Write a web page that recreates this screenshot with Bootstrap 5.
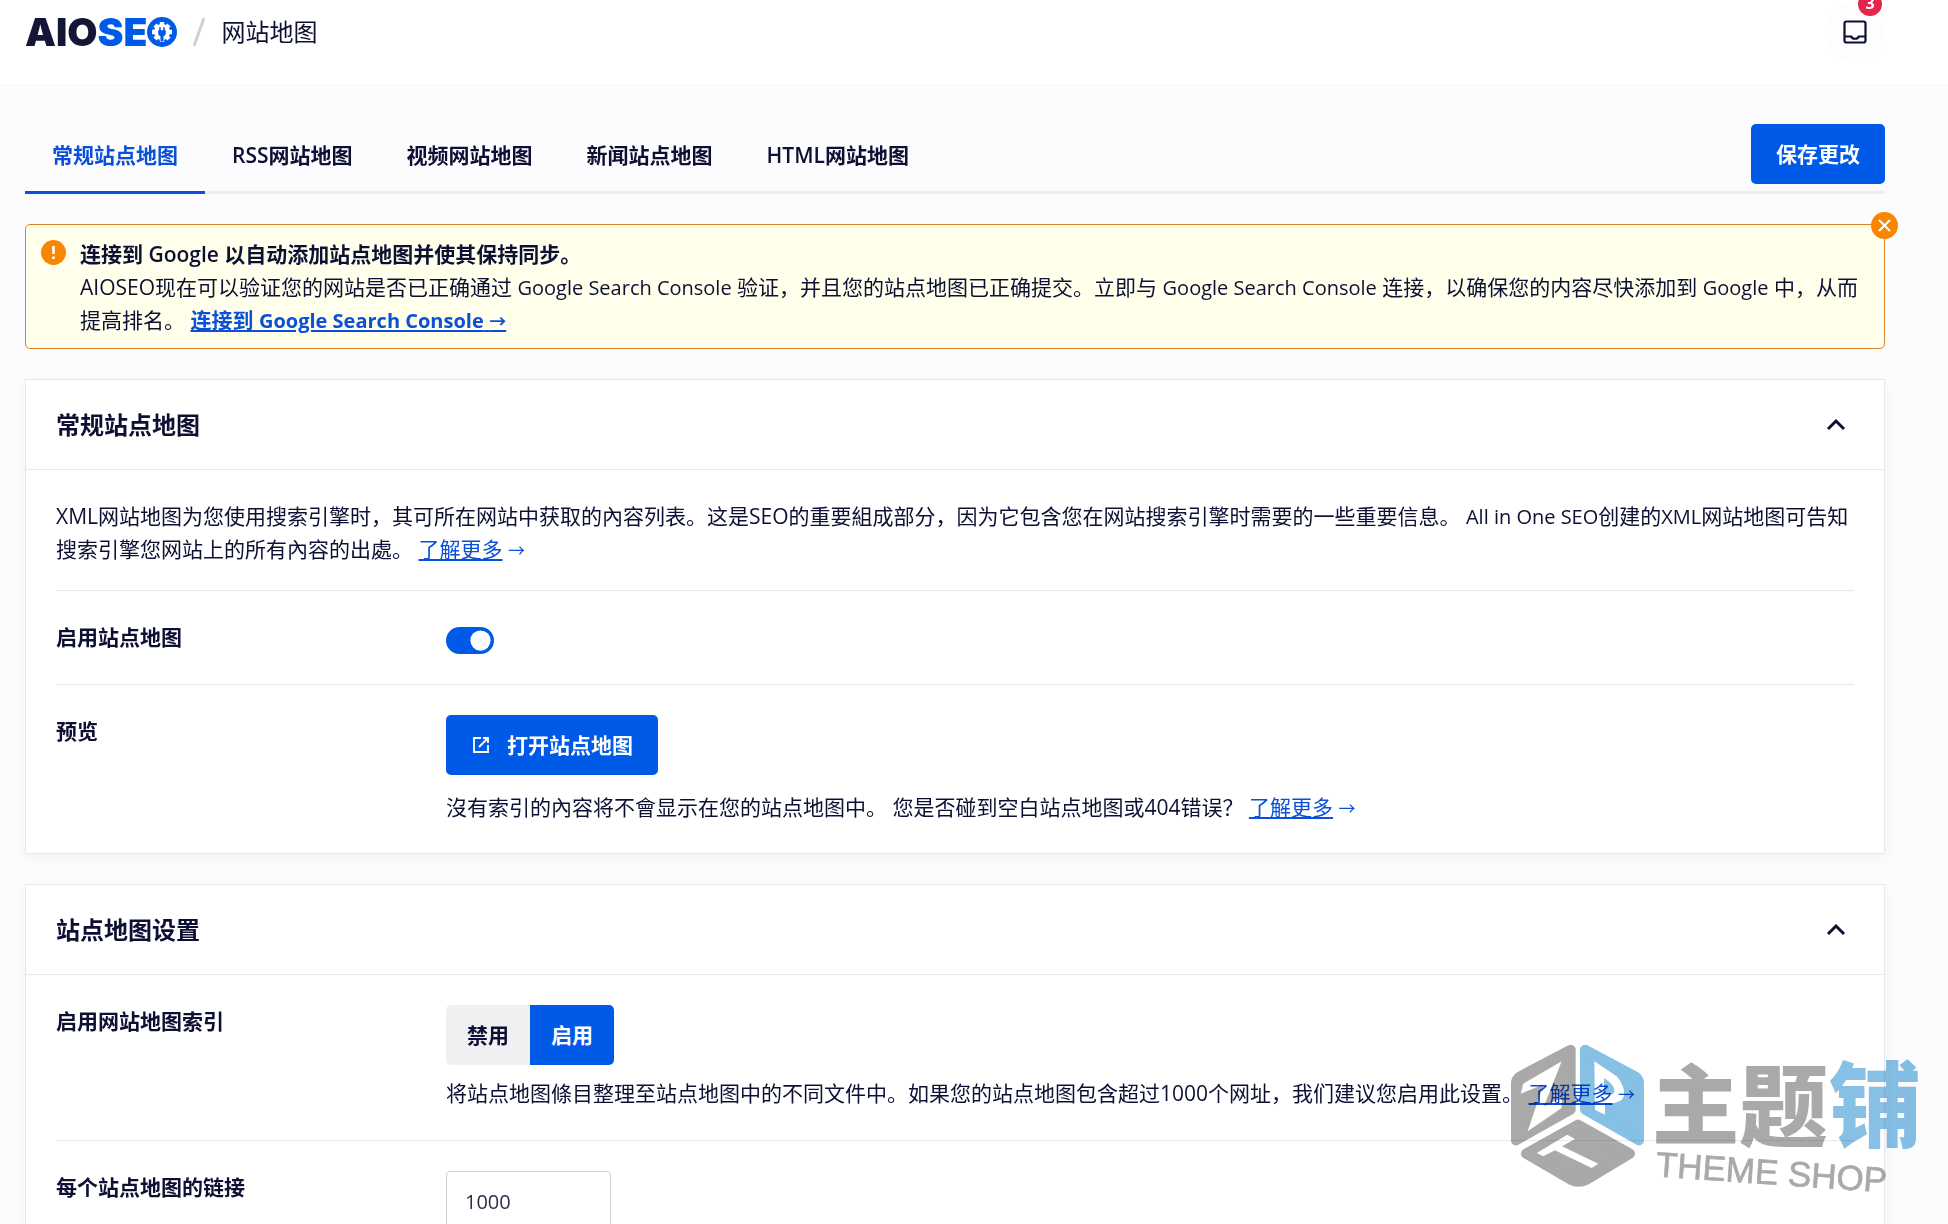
<!DOCTYPE html>
<html lang="zh-CN">
<head>
<meta charset="utf-8">
<meta name="viewport" content="width=device-width, initial-scale=1">
<title>AIOSEO 网站地图</title>
<link href="https://cdn.jsdelivr.net/npm/bootstrap@5.3.0/dist/css/bootstrap.min.css" rel="stylesheet">
<style>
:root{--ink:#0d1033;--blue:#005ae8;--line:#e8e8eb;--orange:#fa8500}
body{font-family:"Open Sans","Noto Sans CJK SC",sans-serif;font-size:21px;line-height:33px;color:var(--ink);background:#fcfcfe}
a{color:#0a50d8}
.shell{overflow:hidden}
.topbar{height:86px;background:#fff;padding:0 63px 22px 25px;border-bottom:1px solid #f8f8fa}
.wordmark{font-family:Inter,sans-serif;font-weight:900;font-size:39px;line-height:44px;color:#141638}
.wordmark span{color:var(--blue)}
.crumb{font-size:24px}
.inbox{width:60px;height:60px;background:#fdfdff;color:var(--ink)}
.count{top:-10px;right:3px;width:24px;height:24px;font-size:16px;line-height:23px;background:#e2264d;color:#fff}
.page{padding:37px 63px 0 25px}
.tabs{border-bottom:3px solid #eeeef0}
.tabs .nav-link{padding:16px 27px 19px;margin-bottom:-3px;color:var(--ink);font-weight:600;border-bottom:3px solid transparent}
.tabs .nav-link.active{color:#0a50d8;border-color:#0a50d8}
.blue-btn,.blue-btn:hover{background:var(--blue);color:#fff;font-size:21px;line-height:33px;font-weight:700;border:0;border-radius:5px;height:60px;padding:0 25px}
.save-btn{margin:1px 0 7px}
.notice{margin-top:30px;padding:13px 16px 11px 54px;background:#ffffeb;border:1px solid #d98228;border-radius:5px}
.notice-mark{left:15px;top:15px}
.notice-close{right:-14px;top:-13px;width:27px;height:27px;background:var(--orange);border:0}
.panel{margin-top:30px;background:#fff;border:1px solid var(--line);box-shadow:0 5px 14px rgba(0,20,60,.045)}
.panel-top{height:90px;padding:0 36px 0 30px;border-bottom:1px solid var(--line)}
.panel-top h2{font-size:24px;line-height:36px;font-weight:600}
.panel-main{padding:0 30px}
.setting{padding:30px 0}
.setting:last-child{padding-bottom:29px}
.setting + .setting,.intro + .setting{border-top:1px solid var(--line)}
.intro{padding:30px 0 24px}
.setting-name{flex:0 0 390px;font-weight:600}
.form-switch .form-check-input{width:48px;height:27px;margin:6px 0 0;border:0;background-color:var(--blue);background-size:27px 27px}
.hint{margin-top:16px}
.hint-tight{margin-top:12px}
.arrow{font-size:17px;line-height:1}
.latin{font-size:20px;line-height:1}
.seg{height:60px;padding:0 21px;border:0;border-radius:5px;background:#f0f0f3;color:var(--ink);font-size:21px;line-height:60px;font-weight:700}
.btn-group > .seg + .btn-check + .seg{margin-left:0}
.btn-check:checked + .seg{background:var(--blue);color:#fff}
.num-box{width:165px;height:60px;padding:0 18px;font-size:20px;border:1px solid #d0d1d7;border-radius:4px;color:#2c2f45}
.stamp{right:28px;top:1043px;pointer-events:none;mix-blend-mode:multiply}
</style>
<script src="https://cdn.jsdelivr.net/npm/bootstrap@5.3.0/dist/js/bootstrap.bundle.min.js"></script>
</head>
<body>
<div class="shell vh-100 position-relative">
  <header class="topbar d-flex align-items-center">
    <div class="wordmark d-flex align-items-center">AIO<span>SE</span>
      <svg width="30" height="30" viewBox="0 0 30 30" aria-hidden="true"><circle cx="15" cy="15" r="15" fill="#005ae8"/><circle cx="15" cy="15" r="8" fill="#fff"/><g stroke="#fff" stroke-width="4.4"><path d="M15 5v20M5 15h20M8 8l14 14M22 8L8 22"/></g><path d="M11.2 13.2h7.6v3q0 2.700-2.300 3.300v5h-3v-5q-2.300-.600-2.300-3.300z" fill="#005ae8"/><path d="M13 10.200v4M17 10.200v4" stroke="#005ae8" stroke-width="1.600"/></svg>
    </div>
    <svg class="mx-3" width="12" height="30" viewBox="0 0 12 30" aria-hidden="true"><path d="M11 1L1 29" stroke="#d0d1d7" stroke-width="3"/></svg>
    <div class="crumb">网站地图</div>
    <button class="inbox btn rounded-circle border-0 p-0 ms-auto position-relative" aria-label="通知">
      <svg width="24" height="24" viewBox="0 0 24 24" fill="none" stroke="currentColor" stroke-width="2.200"><rect x="1.500" y="1.500" width="21" height="21" rx="2"/><path d="M2 16.500h6.200a4 3.300 0 0 0 7.600 0H22"/></svg>
      <span class="count position-absolute rounded-circle fw-bold">3</span>
    </button>
  </header>
  <main class="page">
    <div class="tabs d-flex justify-content-between align-items-stretch">
      <nav class="nav align-items-stretch">
        <a class="nav-link active" href="#">常规站点地图</a>
        <a class="nav-link" href="#">RSS网站地图</a>
        <a class="nav-link" href="#">视频网站地图</a>
        <a class="nav-link" href="#">新闻站点地图</a>
        <a class="nav-link" href="#">HTML网站地图</a>
      </nav>
      <button class="btn blue-btn save-btn">保存更改</button>
    </div>

    <section class="notice position-relative">
      <svg class="notice-mark position-absolute" width="25" height="25" viewBox="0 0 25 25" aria-hidden="true"><circle cx="12.500" cy="12.500" r="12.500" fill="#fa8500"/><path d="M12.500 6v8M12.500 16.500v2.500" stroke="#fff" stroke-width="2.600"/></svg>
      <button class="notice-close position-absolute rounded-circle p-0 d-flex align-items-center justify-content-center" aria-label="关闭"><svg width="13" height="13" viewBox="0 0 13 13"><path d="M1 1l11 11M12 1L1 12" stroke="#fff" stroke-width="2"/></svg></button>
      <div class="fw-semibold">连接到 Google 以自动添加站点地图并使其保持同步。</div>
      <div>AIOSEO现在可以验证您的网站是否已正确通过 <span class="latin">Google Search Console</span> 验证，并且您的站点地图已正确提交。立即与 <span class="latin">Google Search Console</span> 连接，以确保您的内容尽快添加到 <span class="latin">Google</span> 中，从而提高排名。 <a class="fw-bold" href="#">连接到 <span class="latin">Google Search Console</span> <span class="arrow">→</span></a></div>
    </section>

    <section class="panel">
      <div class="panel-top d-flex align-items-center justify-content-between">
        <h2 class="m-0">常规站点地图</h2>
        <button class="btn p-0 border-0 d-flex" aria-label="收起"><svg width="24" height="24" viewBox="0 0 24 24"><path d="M4 16l8-8 8 8" fill="none" stroke="#0d1033" stroke-width="3"/></svg></button>
      </div>
      <div class="panel-main">
        <div class="intro">XML网站地图为您使用搜索引擎时，其可所在网站中获取的內容列表。这是SEO的重要組成部分，因为它包含您在网站搜索引擎时需要的一些重要信息。 <span class="latin">All in One SEO</span>创建的<span class="latin">XML</span>网站地图可告知搜索引擎您网站上的所有內容的出處。 <a href="#">了解更多</a> <a class="arrow text-decoration-none" href="#">→</a></div>
        <div class="setting d-flex">
          <label class="setting-name" for="enable">启用站点地图</label>
          <div class="form-check form-switch p-0 m-0 d-flex"><input class="form-check-input float-none" type="checkbox" role="switch" id="enable" checked></div>
        </div>
        <div class="setting d-flex">
          <div class="setting-name">预览</div>
          <div>
            <button class="btn blue-btn d-flex align-items-center gap-3"><svg width="20" height="20" viewBox="0 0 20 20" fill="none" stroke="#fff" stroke-width="1.800"><path d="M10 3H3v14h14v-7M12 3h5v5M17 3l-9 9"/></svg>打开站点地图</button>
            <div class="hint">沒有索引的內容将不會显示在您的站点地图中。 您是否碰到空白站点地图或404错误？ <a href="#">了解更多</a> <a class="arrow text-decoration-none" href="#">→</a></div>
          </div>
        </div>
      </div>
    </section>

    <section class="panel">
      <div class="panel-top d-flex align-items-center justify-content-between">
        <h2 class="m-0">站点地图设置</h2>
        <button class="btn p-0 border-0 d-flex" aria-label="收起"><svg width="24" height="24" viewBox="0 0 24 24"><path d="M4 16l8-8 8 8" fill="none" stroke="#0d1033" stroke-width="3"/></svg></button>
      </div>
      <div class="panel-main">
        <div class="setting d-flex">
          <div class="setting-name">启用网站地图索引</div>
          <div>
            <div class="btn-group" role="group" aria-label="启用网站地图索引">
              <input class="btn-check" type="radio" name="index" id="off"><label class="btn seg" for="off">禁用</label>
              <input class="btn-check" type="radio" name="index" id="on" checked><label class="btn seg" for="on">启用</label>
            </div>
            <div class="hint-tight">将站点地图條目整理至站点地图中的不同文件中。如果您的站点地图包含超过1000个网址，我们建议您启用此设置。 <a href="#">了解更多</a> <a class="arrow text-decoration-none" href="#">→</a></div>
          </div>
        </div>
        <div class="setting d-flex">
          <label class="setting-name" for="links">每个站点地图的链接</label>
          <input class="num-box" id="links" type="text" inputmode="numeric" value="1000">
        </div>
      </div>
    </section>
  </main>

  <svg class="stamp position-absolute" width="410" height="150" viewBox="90 100 1230 450" aria-label="主题铺 THEME SHOP">
    <g stroke-linejoin="round" stroke-width="30">
      <path d="M272 120V300L108 392V220Q108 208 120 200Z" fill="#a9a9a9" stroke="#a9a9a9"/>
      <path d="M315 120V300L477 392V220Q477 208 466 200Z" fill="#86c0e4" stroke="#86c0e4"/>
      <path d="M294 345L450 432L320 510Q296 522 272 510L138 432Z" fill="#a9a9a9" stroke="#a9a9a9"/>
    </g>
    <path d="M130 222L245 155L192 290L245 265V295L143 365L190 225L122 252Z" fill="#fff"/>
    <path d="M343 155L410 200Q436 230 432 258Q425 285 375 280V315L345 300ZM372 205V250Q405 262 403 240Q402 225 372 205Z" fill="#fff" fill-rule="evenodd"/>
    <path d="M262 375L285 388L246 410L355 462L335 475L225 422L190 440L170 430Z" fill="#fff"/>
    <g font-family="Noto Sans CJK SC" font-weight="900">
      <text x="516" y="386" font-size="262" fill="#a9a9a9">主</text>
      <text x="778" y="388" font-size="266" fill="#a9a9a9">题</text>
      <text x="1046" y="392" font-size="278" fill="#86c0e4">铺</text>
    </g>
    <text transform="rotate(4 528 498)" x="526" y="500" font-family="Liberation Sans" font-size="105" fill="#a9a9a9" stroke="#a9a9a9" stroke-width="2">THEME SHOP</text>
  </svg>
</div>
</body>
</html>
